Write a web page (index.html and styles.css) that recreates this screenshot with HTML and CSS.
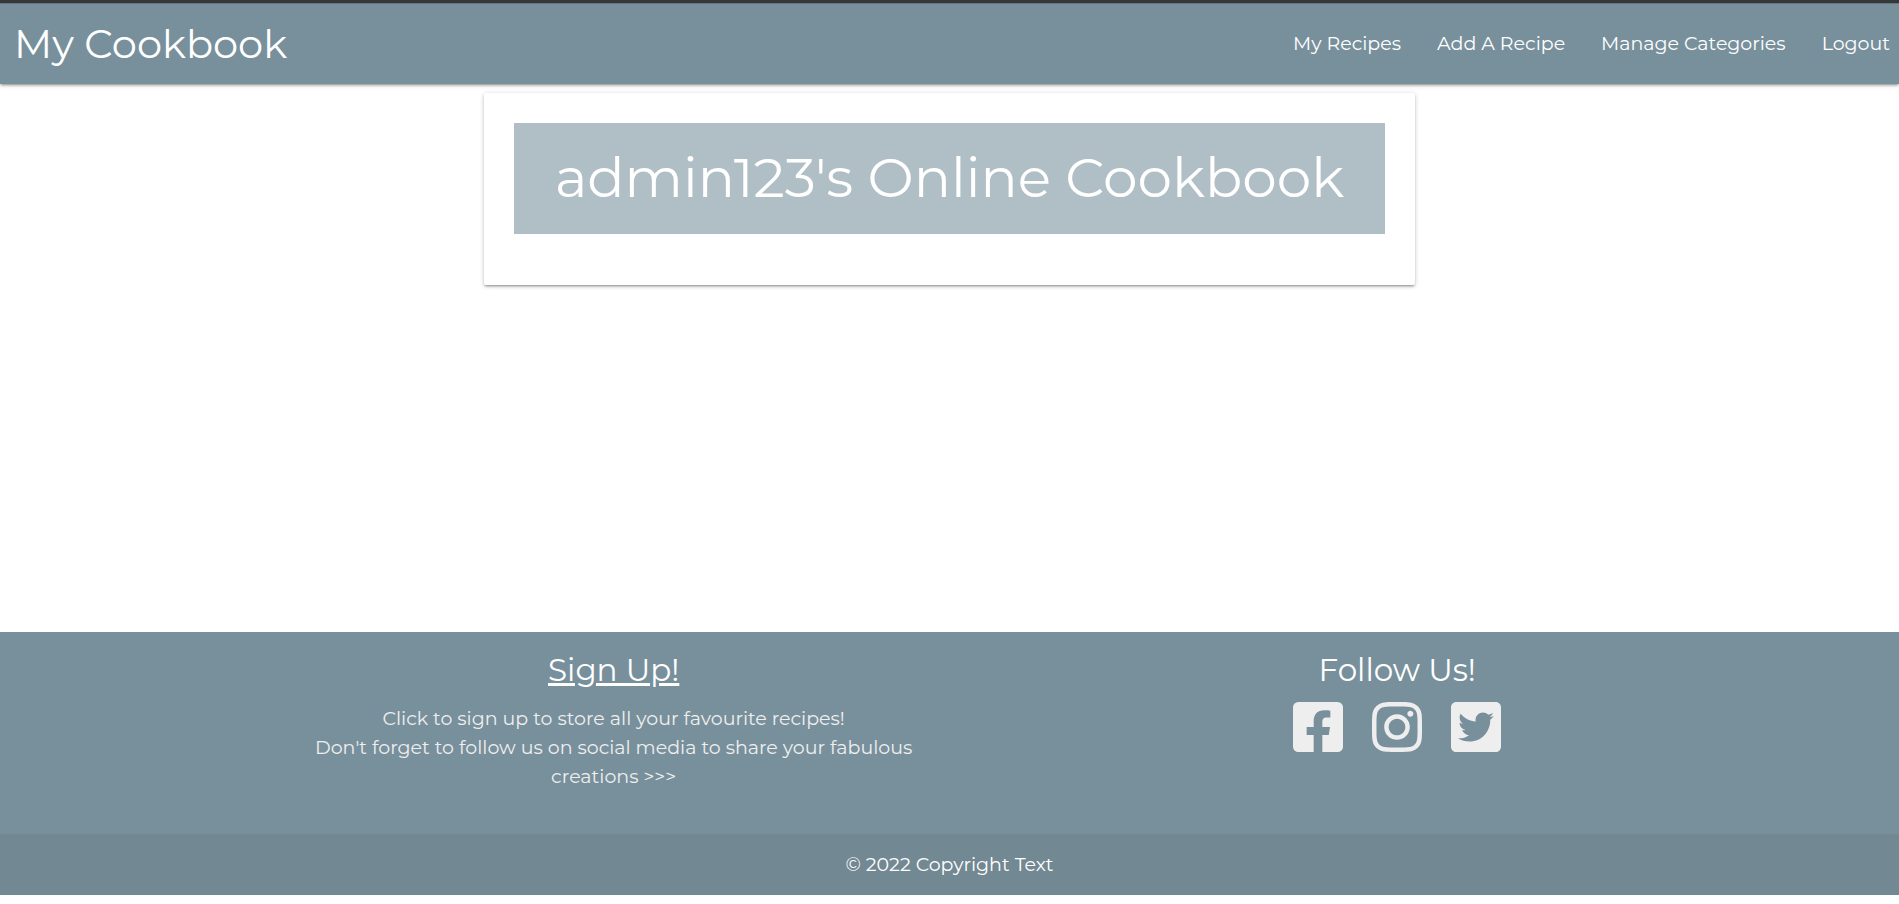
FILE: index.html
```html
<!DOCTYPE html>
<html lang="en">
<head>
<meta charset="utf-8">
<meta name="viewport" content="width=device-width, initial-scale=1">
<title>My Cookbook</title>
<link rel="stylesheet" href="styles.css">
</head>
<body>
<header class="navbar">
  <a class="brand" href="#">My Cookbook</a>
  <nav class="nav-links" aria-label="Main">
    <a href="#">My Recipes</a>
    <a href="#">Add A Recipe</a>
    <a href="#">Manage Categories</a>
    <a href="#">Logout</a>
  </nav>
</header>
<main class="content">
  <section class="card">
    <h1 class="card-title">admin123's Online Cookbook</h1>
  </section>
</main>
<footer class="footer">
  <div class="footer-row">
    <div class="signup">
      <h2 class="footer-heading"><a href="#">Sign Up!</a></h2>
      <p class="footer-text">Click to sign up to store all your favourite recipes!<br>Don't forget to follow us on social media to share your fabulous creations &gt;&gt;&gt;</p>
    </div>
    <div class="follow">
      <h2 class="footer-heading">Follow Us!</h2>
      <div class="social">
        <a href="#" aria-label="Facebook"><svg class="icon" viewBox="0 32 448 448"><path d="M400 32H48A48 48 0 0 0 0 80v352a48 48 0 0 0 48 48h137.25V327.69h-63V256h63v-54.64c0-62.15 37-96.48 93.67-96.48 27.14 0 55.52 4.84 55.52 4.84v61h-31.27c-30.81 0-40.42 19.12-40.42 38.73V256h68.78l-11 71.69h-57.78V480H400a48 48 0 0 0 48-48V80a48 48 0 0 0-48-48z"/></svg></a>
        <a href="#" aria-label="Instagram"><svg class="icon" viewBox="0 32 448 448"><path d="M224.1 141c-63.600 0-114.900 51.300-114.900 114.900s51.300 114.900 114.900 114.900S339 319.500 339 255.900 287.700 141 224.100 141zm0 189.600c-41.100 0-74.700-33.500-74.700-74.700s33.500-74.700 74.700-74.700 74.700 33.500 74.700 74.700-33.600 74.700-74.700 74.700zm146.400-194.300c0 14.900-12 26.800-26.800 26.800-14.900 0-26.800-12-26.800-26.800s12-26.800 26.800-26.800 26.800 12 26.800 26.800zm76.100 27.200c-1.700-35.900-9.900-67.700-36.200-93.900-26.200-26.200-58-34.400-93.900-36.200-37-2.100-147.900-2.100-184.900 0-35.800 1.700-67.600 9.900-93.900 36.100s-34.400 58-36.200 93.900c-2.100 37-2.100 147.900 0 184.900 1.700 35.900 9.900 67.700 36.200 93.900s58 34.400 93.900 36.200c37 2.100 147.900 2.100 184.900 0 35.900-1.700 67.700-9.900 93.900-36.200 26.200-26.200 34.400-58 36.200-93.900 2.100-37 2.100-147.800 0-184.800zM398.800 388c-7.800 19.600-22.900 34.700-42.600 42.600-29.500 11.700-99.500 9-132.100 9s-102.700 2.600-132.100-9c-19.600-7.800-34.700-22.900-42.600-42.600-11.700-29.500-9-99.500-9-132.100s-2.600-102.700 9-132.100c7.800-19.600 22.900-34.700 42.600-42.600 29.500-11.700 99.500-9 132.100-9s102.700-2.600 132.100 9c19.600 7.800 34.700 22.900 42.600 42.600 11.700 29.500 9 99.500 9 132.100s2.700 102.700-9 132.100z"/></svg></a>
        <a href="#" aria-label="Twitter"><svg class="icon" viewBox="0 32 448 448"><path d="M400 32H48C21.500 32 0 53.500 0 80v352c0 26.500 21.500 48 48 48h352c26.500 0 48-21.500 48-48V80c0-26.500-21.500-48-48-48zm-48.900 158.800c.2 2.800.2 5.700.2 8.500 0 86.700-66 186.600-186.600 186.600-37.200 0-71.700-10.800-100.700-29.400 5.300.6 10.400.8 15.800.8 30.700 0 58.900-10.400 81.400-28-28.800-.6-53-19.500-61.300-45.500 10.100 1.500 19.200 1.500 29.600-1.200-30-6.100-52.500-32.500-52.500-64.400v-.8c8.700 4.900 18.900 7.900 29.600 8.300a65.447 65.447 0 0 1-29.200-54.600c0-12.200 3.200-23.400 8.900-33.100 32.300 39.800 80.800 65.800 135.200 68.600-9.300-44.500 24-80.600 64-80.600 18.900 0 35.900 7.900 47.900 20.700 14.800-2.800 29-8.300 41.600-15.800-4.900 15.200-15.200 28-28.800 36.100 13.200-1.400 26-5.100 37.800-10.200-8.900 13.100-20.100 24.700-32.900 34z"/></svg></a>
      </div>
    </div>
  </div>
  <div class="copyright">© 2022 Copyright Text</div>
</footer>
</body>
</html>
```
FILE: styles.css
```css
* { box-sizing: border-box; }
body {
  margin: 0;
  min-height: 100vh;
  padding-bottom: 9px;
  display: flex;
  flex-direction: column;
  border-top: 3px solid #343839;
  background: #fff;
  font-family: Montserrat, Inter, sans-serif;
  font-size: 19px;
  color: #fff;
}
a { color: inherit; text-decoration: none; }
h1, h2, p { margin: 0; font-weight: 400; }
.navbar {
  display: flex;
  align-items: center;
  justify-content: space-between;
  height: 81px;
  padding: 0 9px 2px 14px;
  border-top: 1px solid #66757c;
  background: #78909c;
  box-shadow: 0 2px 2px rgba(0,0,0,.14), 0 3px 1px -2px rgba(0,0,0,.12), 0 1px 5px rgba(0,0,0,.2);
}
.brand { font-size: 40px; }
.nav-links { display: flex; gap: 36px; }
.content { flex: 1; padding: 9px 16px; }
.card {
  width: fit-content;
  margin: 0 auto;
  padding: 30px 30px 51px;
  background: #fff;
  border-radius: 2px;
  box-shadow: 0 2px 2px rgba(0,0,0,.14), 0 3px 1px -2px rgba(0,0,0,.12), 0 1px 5px rgba(0,0,0,.2);
}
.card-title {
  padding: 21px 41px 23px;
  background: #b0bec5;
  font-size: 55px;
  line-height: 67px;
  text-align: center;
}
.footer { background: #78909c; }
.footer-row {
  display: grid;
  grid-template-columns: 6fr 2fr 4fr;
  width: calc(70% + 14px);
  margin: 0 auto;
  padding: 20px 0 43px;
  text-align: center;
}
.signup { padding: 0 14px; }
.follow { grid-column: 3; }
.footer-heading { font-size: 31px; line-height: 36px; }
.footer-heading a { text-decoration: underline; }
.footer-text { padding-top: 16px; line-height: 29px; color: #eee; }
.social { display: flex; justify-content: center; gap: 29px; padding-top: 14px; }
.icon { display: block; width: 50px; height: 50px; fill: #eee; }
.copyright {
  background: rgba(51,51,51,.08);
  line-height: 61px;
  text-align: center;
}
```
